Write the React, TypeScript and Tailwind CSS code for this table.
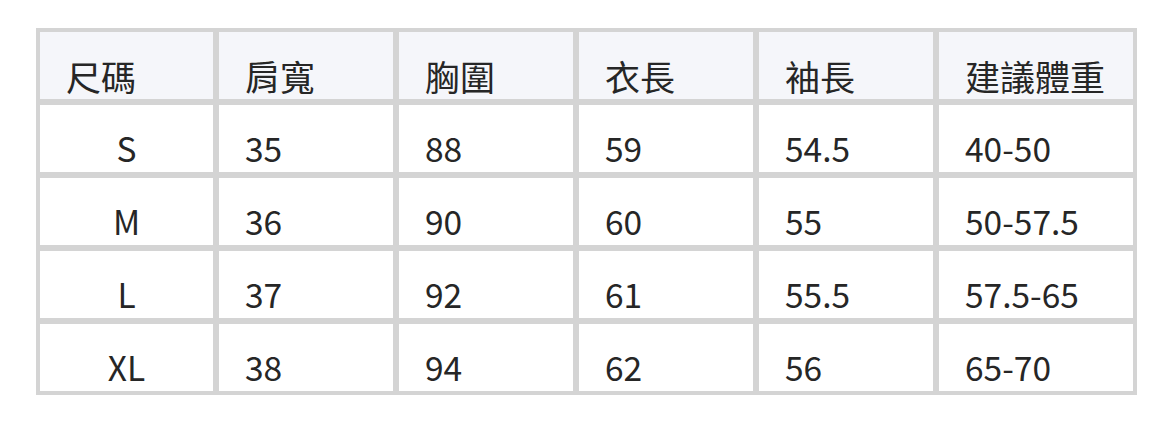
const headers = ['尺碼', '肩寬', '胸圍', '衣長', '袖長', '建議體重']

const rows = [
  ['S', '35', '88', '59', '54.5', '40-50'],
  ['M', '36', '90', '60', '55', '50-57.5'],
  ['L', '37', '92', '61', '55.5', '57.5-65'],
  ['XL', '38', '94', '62', '56', '65-70'],
]

export default function App() {
  return (
    <div
      className="min-h-screen bg-white pt-[28px] pl-[36px] text-[#262626]"
      style={{ fontFamily: '"Noto Sans CJK TC", "Noto Sans", sans-serif' }}
    >
      <div className="grid w-[1101px] grid-cols-[173px_174px_174px_174px_174px_1fr] grid-rows-[67px_67px_67px_67px_67px] gap-[6px] bg-[#d4d4d4] p-[4px]">
        {headers.map((h) => (
          <div key={h} className="flex items-end bg-[#f5f6fa] pb-[6px] pl-[26px] text-[35px] leading-none">
            {h}
          </div>
        ))}
        {rows.map((r) =>
          r.map((v, i) => (
            <div
              key={r[0] + i}
              className={
                i === 0
                  ? 'flex items-end justify-center bg-white pb-[8px] text-[33.5px] leading-none'
                  : 'flex items-end bg-white pb-[8px] pl-[26px] text-[33.5px] leading-none'
              }
            >
              {v}
            </div>
          ))
        )}
      </div>
    </div>
  )
}
